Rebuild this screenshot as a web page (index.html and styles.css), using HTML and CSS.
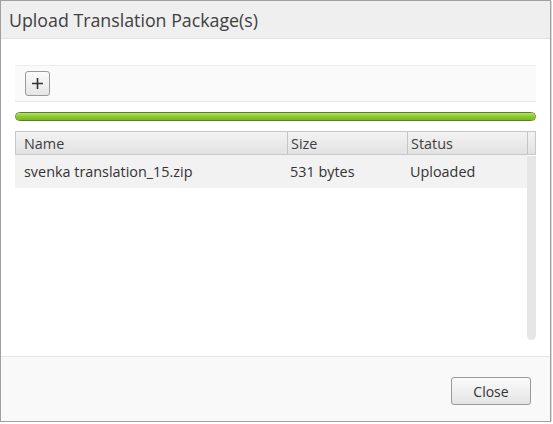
FILE: index.html
```html
<!DOCTYPE html>
<html>
<head>
<meta charset="utf-8">
<link rel="stylesheet" href="styles.css">
</head>
<body>
<div class="dialog">
  <div class="dlg-header">
    <span class="dlg-title">Upload Translation Package(s)</span>
  </div>
  <div class="dlg-content">
    <div class="toolbar">
      <button class="add-btn" type="button" aria-label="Add">
        <svg width="13" height="13" viewBox="0 0 13 13"><path d="M6.5 1v11M1 6.5h11" stroke="#333" stroke-width="1.6" fill="none"/></svg>
      </button>
    </div>
    <div class="progress"><div class="progress-fill"></div></div>
    <div class="grid">
      <div class="grid-head">
        <div class="col col-name">Name</div>
        <div class="col col-size">Size</div>
        <div class="col col-status">Status</div>
        <div class="col col-scroll"></div>
      </div>
      <div class="grid-body">
        <div class="rows">
          <div class="row">
            <div class="cell col-name">svenka translation_15.zip</div>
            <div class="cell col-size">531 bytes</div>
            <div class="cell col-status">Uploaded</div>
          </div>
        </div>
        <div class="scrollbar"></div>
      </div>
    </div>
  </div>
  <div class="dlg-footer">
    <button class="close-btn" type="button">Close</button>
  </div>
</div>
</body>
</html>
```
FILE: styles.css
```css
html, body {
  margin: 0;
  padding: 0;
  background: #ffffff;
}
body {
  font-family: "Open Sans", "DejaVu Sans", sans-serif;
  color: #333333;
}
.dialog {
  box-sizing: border-box;
  width: 551px;
  height: 422px;
  border: 1px solid #a0a0a0;
  box-shadow: 1px 1px 0 #d8d8d8;
  display: flex;
  flex-direction: column;
  background: #ffffff;
}
.dlg-header {
  height: 37px;
  background: #efefef;
  border-bottom: 1px solid #e2e2e2;
  display: flex;
  align-items: center;
  padding-left: 8px;
}
.dlg-title {
  font-size: 17.8px;
  color: #404040;
}
.dlg-content {
  flex: 1;
  padding: 26px 14px 0 14px;
  display: flex;
  flex-direction: column;
}
.toolbar {
  height: 35px;
  background: #fafafa;
  border-top: 1px solid #ececec;
  border-bottom: 1px solid #e6e6e6;
  display: flex;
  align-items: center;
  padding-left: 10px;
}
.add-btn {
  width: 25px;
  height: 25px;
  padding: 0;
  border: 1px solid #9a9a9a;
  border-radius: 3px;
  background: linear-gradient(#fbfbfb, #e6e6e6);
  display: flex;
  align-items: center;
  justify-content: center;
}
.add-btn svg { display: block; }
.progress {
  margin-top: 10px;
  height: 9px;
  box-sizing: border-box;
  border: 1px solid #5d7a2e;
  border-radius: 5px;
  overflow: hidden;
  background: #8dc63f;
}
.progress-fill {
  height: 100%;
  width: 100%;
  background: linear-gradient(#b4e26a, #8acb2c 50%, #78b81c);
}
.grid {
  margin-top: 10px;
  display: flex;
  flex-direction: column;
  font-size: 14.4px;
}
.grid-head {
  display: flex;
  height: 24px;
  box-sizing: border-box;
  border: 1px solid #c8c8c8;
  background: linear-gradient(#f3f3f3, #e2e2e2);
}
.col {
  box-sizing: border-box;
  padding-left: 3px;
  line-height: 23px;
  color: #404040;
}
.grid-head .col-name { padding-left: 8px; }
.grid-head .col + .col {
  border-left: 1px solid #c4c4c4;
}
.col-name { width: 271px; flex: none; }
.col-size { width: 120px; flex: none; }
.col-status { width: 120px; flex: none; }
.col-scroll { flex: 1; padding: 0; }
.grid-body {
  display: flex;
  height: 185px;
}
.rows {
  width: 512px;
  flex: none;
}
.row {
  display: flex;
  height: 33px;
  align-items: center;
  background: #f2f2f2;
}
.cell {
  box-sizing: border-box;
  padding-left: 9px;
  color: #333333;
}
.cell.col-name { width: 272px; }
.cell.col-size { width: 120px; padding-left: 3px; }
.cell.col-status { width: 120px; padding-left: 3px; }
.scrollbar {
  width: 9px;
  margin-top: 1px;
  background: #e6e6e6;
  border-radius: 0 0 5px 5px;
}
.dlg-footer {
  height: 64px;
  border-top: 1px solid #e6e6e6;
  background: #f9f9f9;
  display: flex;
  justify-content: flex-end;
  align-items: flex-start;
  padding-right: 19px;
}
.close-btn {
  margin-top: 20px;
  width: 80px;
  height: 28px;
  border: 1px solid #9a9a9a;
  border-radius: 3px;
  background: linear-gradient(#fbfbfb, #e4e4e4);
  font-family: "Open Sans", "DejaVu Sans", sans-serif;
  font-size: 14px;
  color: #333333;
  padding: 0;
}
```
